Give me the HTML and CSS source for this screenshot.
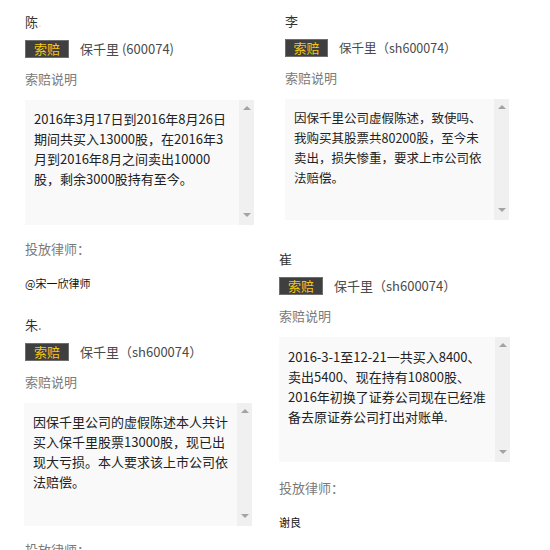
FILE: index.html
```html
<!DOCTYPE html>
<html lang="zh-CN">
<head>
<meta charset="utf-8">
<title>索赔列表</title>
<link rel="stylesheet" href="styles.css">
</head>
<body>
<div class="page">
  <div class="col col-left">
    <div class="card">
      <div class="name">陈<span class="dot dot-faint">.</span></div>
      <div class="claim-row"><span class="badge">索赔</span><span class="stock">保千里 (600074)</span></div>
      <div class="label">索赔说明</div>
      <div class="box box-l1">
        <div class="box-text">2016年3月17日到2016年8月26日<br>期间共买入13000股，在2016年3<br>月到2016年8月之间卖出10000<br>股，剩余3000股持有至今。</div>
        <div class="scrollbar"><span class="arrow-up"></span><span class="arrow-down"></span></div>
      </div>
      <div class="label lawyer-label">投放律师：</div>
      <div class="lawyer">@宋一欣律师</div>
    </div>
    <div class="card card-l2">
      <div class="name">朱<span class="dot">.</span></div>
      <div class="claim-row"><span class="badge">索赔</span><span class="stock">保千里（sh600074）</span></div>
      <div class="label">索赔说明</div>
      <div class="box box-l2">
        <div class="box-text">因保千里公司的虚假陈述本人共计<br>买入保千里股票13000股，现已出<br>现大亏损。本人要求该上市公司依<br>法赔偿。</div>
        <div class="scrollbar"><span class="arrow-up"></span><span class="arrow-down"></span></div>
      </div>
      <div class="label lawyer-label">投放律师：</div>
    </div>
  </div>
  <div class="col col-right">
    <div class="card card-r1">
      <div class="name">李</div>
      <div class="claim-row"><span class="badge badge-sm">索赔</span><span class="stock">保千里（sh600074）</span></div>
      <div class="label">索赔说明</div>
      <div class="box box-r1">
        <div class="box-text">因保千里公司虚假陈述，致使吗、<br>我购买其股票共80200股，至今未<br>卖出，损失惨重，要求上市公司依<br>法赔偿。</div>
        <div class="scrollbar"><span class="arrow-up"></span><span class="arrow-down"></span></div>
      </div>
    </div>
    <div class="card card-r2">
      <div class="name">崔</div>
      <div class="claim-row"><span class="badge">索赔</span><span class="stock">保千里（sh600074）</span></div>
      <div class="label">索赔说明</div>
      <div class="box box-r2">
        <div class="box-text">2016-3-1至12-21一共买入8400、<br>卖出5400、现在持有10800股、<br>2016年初换了证券公司现在已经准<br>备去原证券公司打出对账单.</div>
        <div class="scrollbar"><span class="arrow-up"></span><span class="arrow-down"></span></div>
      </div>
      <div class="label lawyer-label">投放律师：</div>
      <div class="lawyer">谢良</div>
    </div>
  </div>
</div>
</body>
</html>
```

FILE: styles.css
```css
* { box-sizing: border-box; }
html, body { margin: 0; padding: 0; background: #ffffff; }
body {
  font-family: "Noto Sans CJK SC", "Noto Sans", sans-serif;
  font-size: 13px;
  color: #333;
  overflow: hidden;
  height: 550px;
}
.page {
  display: flex;
  gap: 31px;
  padding: 11px 0 0 25px;
}
.col { display: flex; flex-direction: column; }
.col-left { width: 229px; padding-top: 1px; }
.col-right { width: 231px; }

.card { display: flex; flex-direction: column; }
.card-l2 { margin-top: 22px; }
.card-r2 { margin-top: 29px; margin-left: -6px; }

.name {
  font-size: 13px;
  line-height: 20px;
  height: 20px;
  color: #333;
  margin-bottom: 8px;
}
.dot { color: #666; }
.dot-faint { color: #f0dcb8; }

.claim-row {
  display: flex;
  align-items: center;
  height: 18px;
  margin-bottom: 11px;
}
.badge {
  width: 44px;
  height: 18px;
  border: 1px solid #6e6e6e;
  background: #3f3f3f;
  color: #f2c811;
  font-size: 13px;
  line-height: 16px;
  text-align: center;
}
.badge-sm { width: 43px; }
.stock {
  margin-left: 11px;
  font-size: 13px;
  line-height: 18px;
  color: #4a4a4a;
  white-space: nowrap;
}
.card-r1 .stock { font-size: 12.5px; }

.label {
  font-size: 13px;
  line-height: 20px;
  height: 20px;
  color: #7a7a7a;
  margin-bottom: 11px;
}

.box {
  display: flex;
  background: #f9f9f9;
}
.box-l1 { width: 229px; height: 125px; }
.box-l2 { width: 228px; height: 123px; margin-left: -1px; }
.box-r1 { width: 224px; height: 121px; }
.box-r2 { width: 231px; height: 125px; }

.box-text {
  flex: 1;
  padding: 9px 0 0 9px;
  font-size: 13px;
  line-height: 20px;
  color: #222;
  white-space: nowrap;
  overflow: hidden;
}
.box-r1 .box-text { font-size: 12.5px; }
.box-r2 .box-text { padding-top: 10px; }

.scrollbar {
  width: 15px;
  flex: none;
  background: #f0f0f0;
  display: flex;
  flex-direction: column;
  justify-content: space-between;
  align-items: center;
  padding: 6px 0 8px;
}
.arrow-up {
  width: 0; height: 0;
  border-left: 4px solid transparent;
  border-right: 4px solid transparent;
  border-bottom: 4px solid #a3a3a3;
}
.arrow-down {
  width: 0; height: 0;
  border-left: 4px solid transparent;
  border-right: 4px solid transparent;
  border-top: 4px solid #a3a3a3;
}

.lawyer-label { margin-top: 14px; margin-bottom: 0; }
.card-r2 .lawyer-label { margin-top: 16px; }
.lawyer {
  margin-top: 14px;
  font-size: 11px;
  line-height: 20px;
  color: #111;
}
```
